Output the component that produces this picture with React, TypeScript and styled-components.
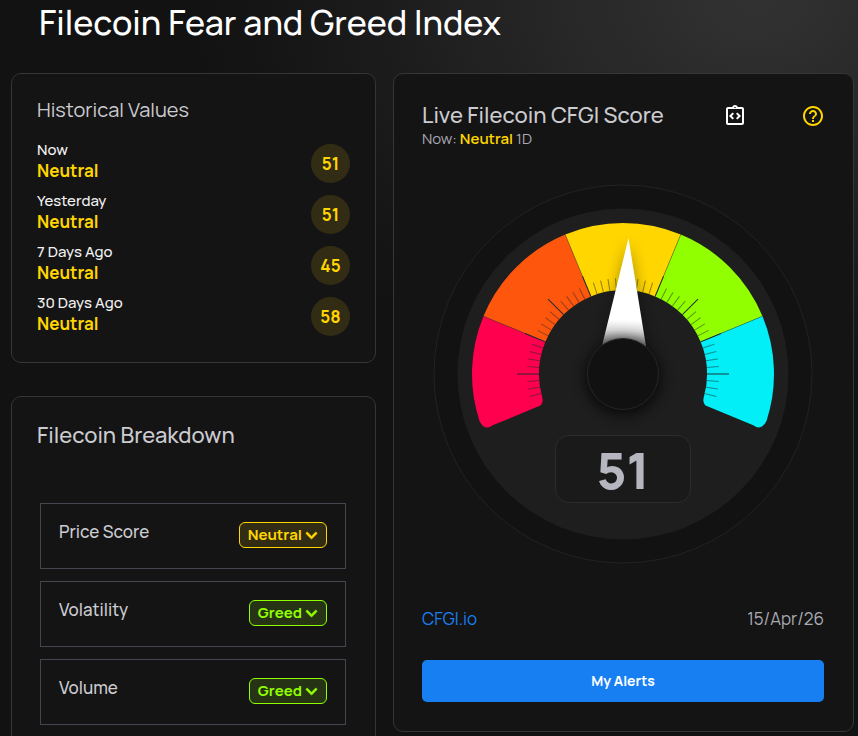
import React from "react";
import styled, { createGlobalStyle } from "styled-components";
import { MdHelpOutline, MdOutlineIntegrationInstructions } from "react-icons/md";
import { FaChevronDown } from "react-icons/fa";

const YELLOW = "#ffd600";
const GREEN = "#91ff00";

const GlobalStyle = createGlobalStyle`
  *, *::before, *::after { box-sizing: border-box; }
  body {
    margin: 0;
    background: #121212;
    color: #ffffff;
    font-family: Manrope, Inter, "Liberation Sans", sans-serif;
  }
  h1, h2, p { margin: 0; }
  button { font-family: inherit; cursor: pointer; }
`;

const Page = styled.main`
  min-height: 100vh;
  padding: 0 4px 0 11px;
  background: radial-gradient(ellipse 560px 400px at 88% 0, #323232 0%, #272727 35%, #191919 75%, #121212 100%) no-repeat #121212;
`;

const PageTitle = styled.h1`
  padding: 0 28px;
  font-size: 34px;
  line-height: 44px;
  font-weight: 500;
`;

const Columns = styled.div`
  display: grid;
  grid-template-columns: minmax(0, 365fr) minmax(0, 461fr);
  align-items: start;
  gap: 17px;
  padding-top: 29px;
`;

const Stack = styled.div`
  display: grid;
  gap: 33px;
`;

const Card = styled.section`
  padding: 24px 25px 26px;
  background: #141414;
  border: 1px solid #35353a;
  border-radius: 10px;
`;

const ScoreCard = styled(Card)`
  padding: 27px 29px 29px 28px;
`;

const CardTitle = styled.h2<{ $large?: boolean }>`
  color: #cbcbd0;
  font-size: ${(p) => (p.$large ? 22 : 20)}px;
  line-height: ${(p) => (p.$large ? 29 : 24)}px;
  font-weight: ${(p) => (p.$large ? 500 : 400)};
`;

const HistoryList = styled.ul`
  display: grid;
  gap: 8px;
  margin: 18px 0 0;
  padding: 0;
  list-style: none;
`;

const HistoryRow = styled.li`
  display: flex;
  justify-content: space-between;
  align-items: flex-end;
  height: 43px;
`;

const HistoryText = styled.div`
  align-self: flex-start;
`;

const Period = styled.p`
  color: #f1f1f1;
  font-size: 15px;
  line-height: 20px;
  font-weight: 500;
`;

const Mood = styled.p`
  color: ${YELLOW};
  font-size: 17px;
  line-height: 22px;
  font-weight: 700;
`;

const ScoreDot = styled.span`
  display: grid;
  place-items: center;
  width: 39px;
  height: 39px;
  border-radius: 50%;
  background: #332c14;
  color: ${YELLOW};
  font-size: 17px;
  font-weight: 700;
`;

const Factors = styled.ul`
  display: grid;
  gap: 12px;
  margin: 53px 4px 0 3px;
  padding: 0;
  list-style: none;
`;

const Factor = styled.li`
  display: flex;
  justify-content: space-between;
  align-items: flex-start;
  padding: 18px 18px 20px;
  border: 1px solid #45454f;
  color: #cbcbd0;
  font-size: 17px;
  line-height: 20px;
  font-weight: 500;
`;

const MoodButton = styled.button<{ $color: string; $fill: string }>`
  display: flex;
  align-items: center;
  gap: 3px;
  height: 26px;
  padding: 0 8px;
  border: 1px solid ${(p) => p.$color};
  border-radius: 6px;
  background: ${(p) => p.$fill};
  color: ${(p) => p.$color};
  font-size: 15px;
  line-height: 20px;
  font-weight: 700;

  svg {
    stroke: currentColor;
    stroke-width: 24px;
  }
`;

const ScoreHeader = styled.header`
  display: flex;
  justify-content: space-between;
`;

const Summary = styled.p`
  color: #a9a9b2;
  font-size: 15px;
  line-height: 18px;
  font-weight: 400;
`;

const SummaryMood = styled.span`
  color: ${YELLOW};
  font-weight: 600;
`;

const Tools = styled.div`
  display: flex;
  align-items: flex-start;
  gap: 54px;
  margin-right: -1px;
  padding-top: 3px;
`;

const IconButton = styled.button<{ $color: string }>`
  display: flex;
  padding: 0;
  border: 0;
  background: none;
  color: ${(p) => p.$color};
`;

const GaugeDrawing = styled.svg`
  display: block;
  width: 100%;
  max-width: 381px;
  margin: 36px auto 43px;
`;

const ScoreValue = styled.text`
  fill: #b6b6c0;
  font-size: 51px;
  font-weight: 800;
`;

const CardFooter = styled.footer`
  display: flex;
  justify-content: space-between;
  color: #a9a9b2;
  font-size: 17px;
  line-height: 22px;
  font-weight: 400;
`;

const SiteLink = styled.a`
  color: #187ff2;
  text-decoration: none;
`;

const AlertsButton = styled.button`
  width: 100%;
  height: 42px;
  margin-top: 30px;
  padding: 0 0 2px;
  border: 0;
  border-radius: 5px;
  background: #187ff2;
  color: #ffffff;
  font-size: 14px;
  font-weight: 700;
`;

const history = [
  { period: "Now", mood: "Neutral", score: 51 },
  { period: "Yesterday", mood: "Neutral", score: 51 },
  { period: "7 Days Ago", mood: "Neutral", score: 45 },
  { period: "30 Days Ago", mood: "Neutral", score: 58 },
];

const factors = [
  { name: "Price Score", mood: "Neutral", color: YELLOW, fill: "#332c14" },
  { name: "Volatility", mood: "Greed", color: GREEN, fill: "#263314" },
  { name: "Volume", mood: "Greed", color: GREEN, fill: "#263314" },
];

const OUTER = 151;
const INNER = 84;

// Angles are in degrees, clockwise from twelve o'clock.
const point = (radius: number, angle: number) => {
  const a = (angle * Math.PI) / 180;
  return `${(radius * Math.sin(a)).toFixed(2)} ${(-radius * Math.cos(a)).toFixed(2)}`;
};

const ring = (from: number, to: number) =>
  `M${point(OUTER, from)} A${OUTER} ${OUTER} 0 0 1 ${point(OUTER, to)} ` +
  `L${point(INNER, to)} A${INNER} ${INNER} 0 0 0 ${point(INNER, from)} Z`;

// Last segment of the scale, with both free corners rounded.
const roundedEnd =
  `M${point(OUTER, 67.5)} A${OUTER} ${OUTER} 0 0 1 ${point(OUTER, 108)} ` +
  `Q${point(150, 112.5)} ${point(140, 111.5)} L${point(91, 111)} ` +
  `Q${point(84, 111)} ${point(INNER, 105)} A${INNER} ${INNER} 0 0 0 ${point(INNER, 67.5)} Z`;

const ticks = Array.from({ length: 47 }, (_, i) => i - 23);

function Gauge({ value }: { value: number }) {
  return (
    <GaugeDrawing viewBox="-190 -190 381 381" role="img" aria-label={`Score ${value}`}>
      <defs>
        <linearGradient id="needle" x1="0" y1="0" x2="0" y2="1">
          <stop offset="0.76" stopColor="#ffffff" />
          <stop offset="0.86" stopColor="#d8d8d8" />
          <stop offset="1" stopColor="#777777" />
        </linearGradient>
        <filter id="shade" x="-50%" y="-50%" width="200%" height="200%">
          <feGaussianBlur stdDeviation="7" />
        </filter>
      </defs>
      <circle r="189" fill="#121212" stroke="#222222" />
      <circle r="165.5" fill="#1e1e1e" />
      <path d={roundedEnd} fill="#ff004f" transform="scale(-1 1)" />
      <path d={ring(-67.5, -22.5)} fill="#ff560d" />
      <path d={ring(-22.5, 22.5)} fill={YELLOW} />
      <path d={ring(22.5, 67.5)} fill={GREEN} />
      <path d={roundedEnd} fill="#02eff7" />
      {ticks.map((i) => (
        <line
          key={i}
          y1={-INNER}
          y2={i % 5 === 0 ? -106 : -96}
          stroke="#1e2a30"
          strokeOpacity={i % 5 === 0 ? 0.95 : 0.5}
          transform={`rotate(${i * 4.5})`}
        />
      ))}
      {[-67.5, -22.5, 22.5, 67.5].map((angle) => (
        <line key={angle} y1={-INNER} y2={-OUTER} stroke="#1e2a30" strokeOpacity="0.45" strokeWidth="0.7" transform={`rotate(${angle})`} />
      ))}
      <g transform={`rotate(${(value - 50) * 2.3})`}>
        <path d="M0 -132 L24 -28 H-20 Z" fill="#000000" opacity="0.35" filter="url(#shade)" />
        <path d="M0 -136 L22 -28 Q0 -40 -22 -28 Z" fill="url(#needle)" />
      </g>
      <circle r="38" cy="3" fill="#000000" opacity="0.7" filter="url(#shade)" />
      <circle r="35.5" fill="#111111" stroke="#262626" />
      <rect x="-67.5" y="61.5" width="135" height="67" rx="13" fill="#1a1a1a" stroke="#2c2c2c" />
      <ScoreValue x="0" y="115" textAnchor="middle">{value}</ScoreValue>
    </GaugeDrawing>
  );
}

export default function App() {
  return (
    <>
      <GlobalStyle />
      <Page>
        <PageTitle>Filecoin Fear and Greed Index</PageTitle>
        <Columns>
          <Stack>
            <Card>
              <CardTitle>Historical Values</CardTitle>
              <HistoryList>
                {history.map((item) => (
                  <HistoryRow key={item.period}>
                    <HistoryText>
                      <Period>{item.period}</Period>
                      <Mood>{item.mood}</Mood>
                    </HistoryText>
                    <ScoreDot>{item.score}</ScoreDot>
                  </HistoryRow>
                ))}
              </HistoryList>
            </Card>
            <Card>
              <CardTitle $large>Filecoin Breakdown</CardTitle>
              <Factors>
                {factors.map((item) => (
                  <Factor key={item.name}>
                    {item.name}
                    <MoodButton type="button" $color={item.color} $fill={item.fill}>
                      {item.mood}
                      <FaChevronDown size={13} />
                    </MoodButton>
                  </Factor>
                ))}
              </Factors>
            </Card>
          </Stack>
          <ScoreCard>
            <ScoreHeader>
              <div>
                <CardTitle $large>Live Filecoin CFGI Score</CardTitle>
                <Summary>
                  Now: <SummaryMood>Neutral</SummaryMood> 1D
                </Summary>
              </div>
              <Tools>
                <IconButton type="button" aria-label="Embed widget" $color="#ffffff">
                  <MdOutlineIntegrationInstructions size={24} />
                </IconButton>
                <IconButton type="button" aria-label="Help" $color={YELLOW}>
                  <MdHelpOutline size={24} />
                </IconButton>
              </Tools>
            </ScoreHeader>
            <Gauge value={51} />
            <CardFooter>
              <SiteLink href="#cfgi">CFGI.io</SiteLink>
              <time dateTime="2026-04-15">15/Apr/26</time>
            </CardFooter>
            <AlertsButton type="button">My Alerts</AlertsButton>
          </ScoreCard>
        </Columns>
      </Page>
    </>
  );
}
